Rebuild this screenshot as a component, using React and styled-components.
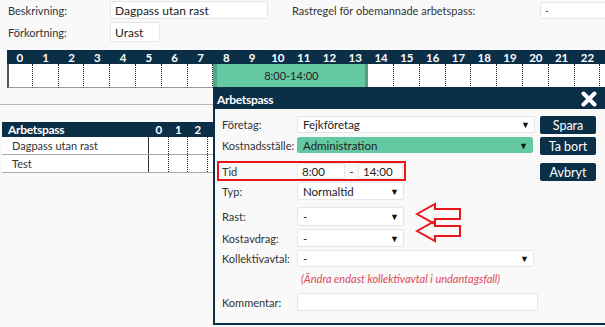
import React from "react";
import styled, { createGlobalStyle } from "styled-components";

const NAVY = "#0b2f47";

const Global = createGlobalStyle`
  html, body {
    margin: 0;
    background: #f9f9f9;
    font-family: Lato, "Open Sans", sans-serif;
    font-size: 11px;
    color: #333;
    overflow: hidden;
  }
`;

const Page = styled.div`
  position: relative;
  width: 605px;
  height: 327px;
  overflow: hidden;
`;

const TopForm = styled.div`
  display: grid;
  grid-template-columns: 102px 182px 248px 80px;
  grid-template-rows: 20px 22px;
  row-gap: 1px;
  align-items: center;
  padding: 0 0 0 8px;
`;

const Label = styled.span`
  font-size: 11px;
  color: #333;
  white-space: nowrap;
`;

const Field = styled.div`
  box-sizing: border-box;
  height: ${(p) => p.h || 18}px;
  width: ${(p) => p.w}px;
  background: #fff;
  border: 1px solid #e6e6e6;
  border-radius: 2px;
  padding: 0 4px;
  display: flex;
  align-items: center;
  font-size: ${(p) => p.fs || 12}px;
  color: #222;
  white-space: nowrap;
`;

const Timeline = styled.div`
  margin: 7px 0 0 7px;
  width: 598px;
  overflow: hidden;
  display: grid;
  grid-template-columns: repeat(24, 25.8px);
`;

const HourHead = styled.div`
  grid-row: 1;
  height: 14px;
  line-height: 15px;
  background: ${NAVY};
  color: #fff;
  font-weight: 700;
  font-size: 11.5px;
  text-align: center;
`;

const HourCell = styled.div`
  grid-row: 2;
  height: 24px;
  background: #fff;
  box-sizing: border-box;
  border-right: 1px dotted #222;
  border-bottom: 1px solid #999;
  border-left: ${(p) => (p.first ? "2px solid #555" : "none")};
`;

const Shift = styled.div`
  grid-row: 2;
  grid-column: ${(p) => p.from + 1} / ${(p) => p.to + 1};
  height: 24px;
  box-sizing: border-box;
  background: #64c9a2;
  border-left: 4px solid #4ea886;
  border-right: 3px solid #5a9c84;
  border-bottom: 1px solid #999;
  display: flex;
  align-items: center;
  justify-content: center;
  font-size: 11px;
  color: #222;
`;

const Divider = styled.div`
  margin-top: 16px;
  height: 1px;
  background: #b8b8b8;
`;

const Table = styled.div`
  margin: 17px 0 0 2px;
  width: 211px;
  overflow: hidden;
`;

const TRow = styled.div`
  display: grid;
  grid-template-columns: 147px repeat(4, 19.5px);
  height: ${(p) => (p.head ? 15 : 17)}px;
  background: ${(p) => (p.head ? NAVY : "#fff")};
  color: ${(p) => (p.head ? "#fff" : "#333")};
  border-bottom: ${(p) => (p.head ? "none" : "1px solid #aaa")};
  align-items: stretch;
`;

const TName = styled.div`
  display: flex;
  align-items: center;
  padding-left: ${(p) => (p.head ? 6 : 10)}px;
  font-weight: ${(p) => (p.head ? 700 : 400)};
  font-size: ${(p) => (p.head ? 12 : 11)}px;
  letter-spacing: ${(p) => (p.head ? "-0.3px" : 0)};
  border-right: ${(p) => (p.head ? "none" : "1px solid #333")};
`;

const THour = styled.div`
  display: flex;
  align-items: center;
  justify-content: center;
  font-weight: 700;
  font-size: 11.5px;
  border-right: ${(p) => (p.head ? "none" : "1px dotted #222")};
`;

const Dialog = styled.div`
  position: absolute;
  left: 213px;
  top: 87px;
  width: 400px;
  height: 238px;
  box-sizing: border-box;
  border: 2px solid ${NAVY};
  background: #f9f9f9;
`;

const DialogHead = styled.div`
  height: 20px;
  background: ${NAVY};
  color: #fff;
  display: flex;
  align-items: center;
  padding-left: 2px;
  font-weight: 700;
  font-size: 12px;
  letter-spacing: -0.3px;
`;

const Close = styled.svg`
  position: absolute;
  left: 365px;
  top: 2px;
`;

const DialogBody = styled.div`
  display: flex;
  padding: 7px 0 0 2px;
`;

const FormCol = styled.div`
  width: 323px;
  display: flex;
  flex-direction: column;
`;

const FormRow = styled.div`
  display: flex;
  align-items: center;
  height: ${(p) => p.h}px;
  margin-top: ${(p) => p.mt || 0}px;
  padding-left: 5px;
`;

const TidBox = styled.div`
  display: flex;
  align-items: center;
  width: 189px;
  height: 20px;
  box-sizing: border-box;
  border: 2px solid #e8141c;
  padding-left: 3px;
  margin-top: 8px;
`;

const FLabel = styled.span`
  width: 75px;
  flex: none;
  font-size: 11px;
  color: #333;
  white-space: nowrap;
`;

const Select = styled.div`
  box-sizing: border-box;
  width: ${(p) => p.w}px;
  height: ${(p) => p.h || 18}px;
  background: ${(p) => (p.green ? "#64c9a2" : "#fff")};
  border: 1px solid ${(p) => (p.green ? "#64c9a2" : "#e6e6e6")};
  border-radius: 2px;
  display: flex;
  align-items: center;
  justify-content: space-between;
  padding: 0 4px 0 5px;
  font-size: 11.5px;
  color: #222;
  &::after {
    content: "▼";
    font-size: 9px;
    color: #111;
  }
`;

const Dash = styled.span`
  width: 13px;
  text-align: center;
  font-size: 11px;
`;

const Note = styled.div`
  padding-left: 84px;
  margin-top: 5px;
  height: 14px;
  font-style: italic;
  font-size: 11px;
  color: #e0485c;
  white-space: nowrap;
`;

const BtnCol = styled.div`
  display: flex;
  flex-direction: column;
  gap: 3px;
`;

const Button = styled.div`
  box-sizing: border-box;
  width: 56px;
  height: 18px;
  margin-top: ${(p) => p.mt || 0}px;
  background: ${NAVY};
  color: #fff;
  border-radius: 2px;
  display: flex;
  align-items: center;
  justify-content: center;
  font-size: 12.5px;
`;

const Arrows = styled.svg`
  position: absolute;
  left: 200px;
  top: 113px;
`;

const hours = Array.from({ length: 24 }, (_, i) => i);

const Arrow = ({ y }) => (
  <polygon
    points={`2,${y} 20,${y - 10} 20,${y - 5} 45,${y - 5} 45,${y + 5} 20,${y + 5} 20,${y + 10}`}
    fill="none"
    stroke="#e8141c"
    strokeWidth="2"
  />
);

export default function App() {
  return (
    <Page>
      <Global />
      <TopForm>
        <Label>Beskrivning:</Label>
        <Field w={158} fs={12}>Dagpass utan rast</Field>
        <Label>Rastregel för obemannade arbetspass:</Label>
        <Field w={70} h={17} fs={10}>-</Field>
        <Label>Förkortning:</Label>
        <Field w={50} h={20}>Urast</Field>
      </TopForm>

      <Timeline>
        {hours.map((h) => (
          <HourHead key={"h" + h}>{h < 23 ? h : ""}</HourHead>
        ))}
        {hours.map((h) => (
          <HourCell key={"c" + h} first={h === 0} style={{ gridColumn: h + 1 }} />
        ))}
        <Shift from={8} to={14}>8:00-14:00</Shift>
      </Timeline>

      <Divider />

      <Table>
        <TRow head>
          <TName head>Arbetspass</TName>
          {hours.slice(0, 3).map((h) => (
            <THour head key={h}>{h}</THour>
          ))}
        </TRow>
        {["Dagpass utan rast", "Test"].map((n) => (
          <TRow key={n}>
            <TName>{n}</TName>
            {hours.slice(0, 4).map((h) => (
              <THour key={h} />
            ))}
          </TRow>
        ))}
      </Table>

      <Dialog>
        <DialogHead>Arbetspass</DialogHead>
        <Close width="18" height="16" viewBox="0 0 18 16">
          <path d="M3.5 2.5 L14.5 13.5 M14.5 2.5 L3.5 13.5" stroke="#fff" strokeWidth="4" strokeLinecap="round" />
        </Close>
        <DialogBody>
          <FormCol>
            <FormRow h={17}>
              <FLabel>Företag:</FLabel>
              <Select w={238} h={17}>Fejkföretag</Select>
            </FormRow>
            <FormRow h={16} mt={4}>
              <FLabel>Kostnadsställe:</FLabel>
              <Select w={236} h={16} green>Administration</Select>
            </FormRow>
            <TidBox>
              <FLabel>Tid</FLabel>
              <Field w={48} h={16} fs={11.5}>8:00</Field>
              <Dash>-</Dash>
              <Field w={45} h={16} fs={11.5}>14:00</Field>
            </TidBox>
            <FormRow h={18} mt={1}>
              <FLabel>Typ:</FLabel>
              <Select w={107}>Normaltid</Select>
            </FormRow>
            <FormRow h={19} mt={7}>
              <FLabel>Rast:</FLabel>
              <Select w={107} h={19}>-</Select>
            </FormRow>
            <FormRow h={18} mt={3}>
              <FLabel>Kostavdrag:</FLabel>
              <Select w={107}>-</Select>
            </FormRow>
            <FormRow h={17} mt={3}>
              <FLabel>Kollektivavtal:</FLabel>
              <Select w={237} h={17}>-</Select>
            </FormRow>
            <Note>(Ändra endast kollektivavtal i undantagsfall)</Note>
            <FormRow h={18} mt={7}>
              <FLabel>Kommentar:</FLabel>
              <Field w={241} h={18} />
            </FormRow>
          </FormCol>
          <BtnCol>
            <Button>Spara</Button>
            <Button>Ta bort</Button>
            <Button mt={5}>Avbryt</Button>
          </BtnCol>
        </DialogBody>
        <Arrows width="50" height="45" viewBox="0 0 50 45">
          <Arrow y={12} />
          <Arrow y={29} />
        </Arrows>
      </Dialog>
    </Page>
  );
}
